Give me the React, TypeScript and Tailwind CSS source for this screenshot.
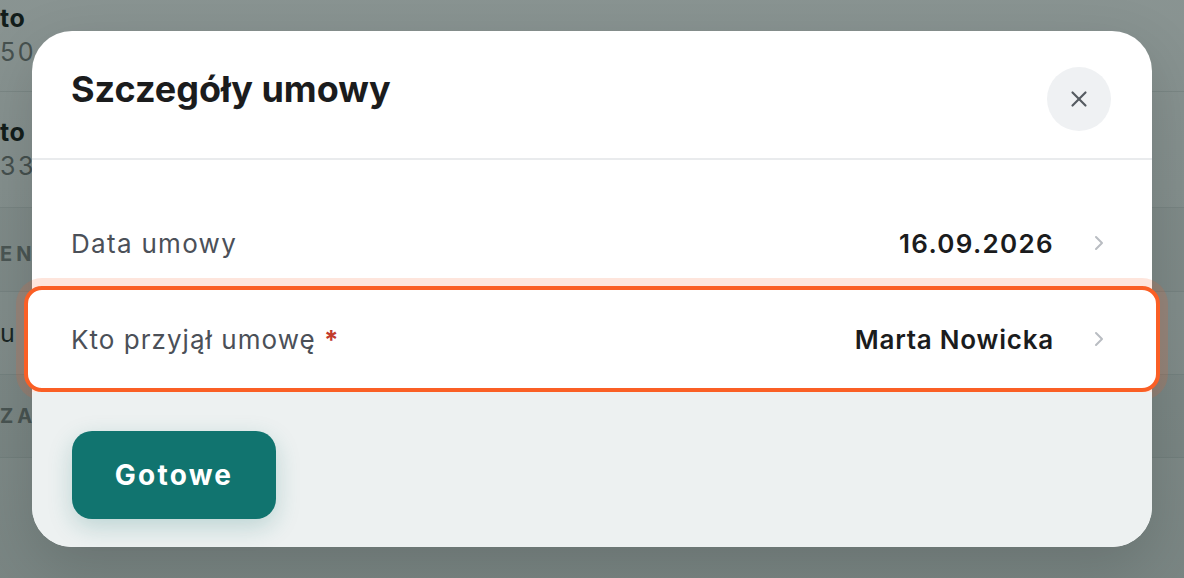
import { X } from "lucide-react";

const font = { fontFamily: "Inter, 'Noto Sans', sans-serif" };

function Chevron() {
  return (
    <svg width="10" height="16" viewBox="0 0 10 16" fill="none" className="shrink-0">
      <path d="M2 2l6 6-6 6" stroke="#b9bdc2" strokeWidth="2" strokeLinecap="round" strokeLinejoin="round" />
    </svg>
  );
}

function BackgroundPage() {
  return (
    <div className="flex flex-col bg-white text-[25px]">
      <div className="flex h-[92px] flex-col justify-start border-b border-[#e6e9e9] pt-[2px]">
        <span className="font-bold leading-8 tracking-wide text-[#111]">to</span>
        <span className="leading-9 tracking-widest text-[#7a7a7a]">50</span>
      </div>
      <div className="flex h-[116px] flex-col justify-center border-b border-[#e6e9e9]">
        <span className="font-bold leading-8 tracking-wide text-[#111]">to</span>
        <span className="leading-9 tracking-widest text-[#7a7a7a]">33</span>
      </div>
      <div className="flex h-[84px] items-center border-b border-[#e6e9e9] bg-[#f6f7f7] pt-2">
        <span className="text-[20px] font-bold uppercase tracking-[0.2em] text-[#888]">EN</span>
      </div>
      <div className="flex h-[83px] items-center border-b border-[#e6e9e9]">
        <span className="leading-8 text-[#222]">u</span>
      </div>
      <div className="flex h-[83px] items-center border-b border-[#e6e9e9] bg-[#f6f7f7]">
        <span className="text-[20px] font-bold uppercase tracking-[0.2em] text-[#888]">ZAŁ</span>
      </div>
      <div className="h-[120px]" />
    </div>
  );
}

export default function App() {
  return (
    <div className="relative h-[578px] w-[1184px] overflow-hidden" style={font}>
      <BackgroundPage />
      <div className="absolute inset-0 bg-gradient-to-b from-[rgba(20,41,37,0.5)] to-[rgba(20,41,37,0.57)]" />
      <div className="absolute inset-0 flex items-center justify-center">
        <div className="flex w-[1120px] flex-col rounded-[40px] bg-white shadow-[0_20px_60px_rgba(0,0,0,0.15)]">
          <div className="flex h-[129px] items-start justify-between border-b-2 border-[#e9ebed] pl-[39px] pr-[41px]">
            <h1 className="mt-[36px] text-[36px] leading-[44px] font-bold text-[#1b1c1d]">Szczegóły umowy</h1>
            <button className="mt-[36px] flex h-16 w-16 items-center justify-center rounded-full bg-[#eff1f3] text-[#555b61]">
              <X size={26} strokeWidth={2} />
            </button>
          </div>
          <div className="flex flex-col pt-[40px]">
            <div className="flex h-[86px] items-center justify-between pl-[39px] pr-[48px]">
              <span className="text-[26px] tracking-[0.05em] text-[#4b5058]">Data umowy</span>
              <div className="flex items-center gap-[40px]">
                <span className="text-[26px] font-semibold tracking-[0.05em] text-[#1b1c1d]">16.09.2026</span>
                <Chevron />
              </div>
            </div>
            <div className="-mx-2 flex h-[106px] items-center justify-between rounded-[18px] border-4 border-[#fa5f25] bg-white pl-[43px] pr-[52px] shadow-[0_0_0_8px_rgba(250,95,37,0.16)]">
              <span className="text-[26px] tracking-[0.04em] text-[#4b5058]">
                Kto przyjął umowę <span className="font-bold text-[#c23a2c]">*</span>
              </span>
              <div className="flex items-center gap-[40px]">
                <span className="text-[26px] font-semibold tracking-[0.03em] text-[#1b1c1d]">Marta Nowicka</span>
                <Chevron />
              </div>
            </div>
          </div>
          <div className="rounded-b-[40px] bg-[#edf1f1] pl-[40px] pt-[39px] pb-[28px]">
            <button className="flex h-[88px] w-[204px] items-center justify-center rounded-[20px] bg-[#11746f] text-[28px] font-bold tracking-[0.08em] text-white shadow-[0_8px_24px_rgba(17,116,111,0.22)]">
              Gotowe
            </button>
          </div>
        </div>
      </div>
    </div>
  );
}
